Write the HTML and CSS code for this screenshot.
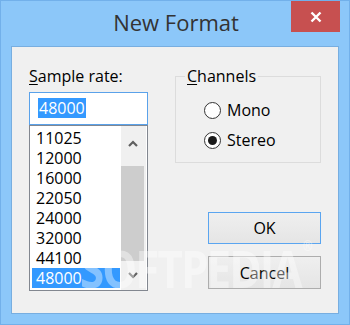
FILE: index.html
```html
<!DOCTYPE html>
<html>
<head>
<meta charset="utf-8">
<link rel="stylesheet" href="styles.css">
</head>
<body>
<div class="window">
  <div class="titlebar">
    <span class="title">New Format</span>
    <div class="close">
      <svg width="12" height="12" viewBox="0 0 12 12"><path d="M1.5 1.5 L10.5 10.5 M10.5 1.5 L1.5 10.5" stroke="#fff" stroke-width="2.4" fill="none"/></svg>
    </div>
  </div>
  <div class="client">
    <div class="col-left">
      <div class="label"><u>S</u>ample rate:</div>
      <div class="combo-input"><span class="sel">48000</span></div>
      <div class="listbox">
        <ul class="items">
          <li>11025</li>
          <li>12000</li>
          <li>16000</li>
          <li>22050</li>
          <li>24000</li>
          <li>32000</li>
          <li>44100</li>
          <li class="selected">48000</li>
        </ul>
        <div class="scrollbar">
          <div class="sb-btn up">
            <svg width="10" height="7" viewBox="0 0 10 7"><path d="M1 6 L5 2 L9 6" stroke="#606060" stroke-width="2.2" fill="none"/></svg>
          </div>
          <div class="sb-track"><div class="thumb"></div></div>
          <div class="sb-btn down">
            <svg width="10" height="7" viewBox="0 0 10 7"><path d="M1 1 L5 5 L9 1" stroke="#606060" stroke-width="2.2" fill="none"/></svg>
          </div>
        </div>
      </div>
    </div>
    <div class="col-right">
      <fieldset class="group">
        <legend><u>C</u>hannels</legend>
        <div class="radios">
          <div class="radio"><span class="circle"></span><span>Mono</span></div>
          <div class="radio checked"><span class="circle"></span><span>Stereo</span></div>
        </div>
      </fieldset>
      <div class="buttons">
        <div class="btn default">OK</div>
        <div class="btn">Cancel</div>
      </div>
    </div>
    <div class="watermark" aria-hidden="true">SOFTPEDIA<span class="reg">®</span></div>
  </div>
</div>
</body>
</html>
```
FILE: styles.css
```css
* { box-sizing: border-box; }
html, body { margin: 0; padding: 0; }
body {
  width: 350px;
  height: 325px;
  font-family: "Open Sans", "Noto Sans", sans-serif;
  font-size: 16px;
  color: #000;
}
.window {
  width: 350px;
  height: 325px;
  border: 1px solid #72b0ea;
  background: #8cc7f9;
  display: flex;
  flex-direction: column;
  padding: 0 10px 10px;
  position: relative;
}
.titlebar {
  height: 45px;
  display: flex;
  align-items: center;
  justify-content: center;
}
.title {
  font-size: 22px;
  color: #333;
  line-height: 45px;
  padding-bottom: 2px;
  padding-left: 2px;
}
.close {
  position: absolute;
  top: 0;
  left: 290px;
  width: 49px;
  height: 31px;
  background: #c75050;
  display: flex;
  align-items: center;
  justify-content: center;
}
.client {
  flex: 1;
  border: 1px solid #78aee0;
  background: #f0f0f0;
  display: flex;
  padding: 19px 0 0 17px;
  gap: 27px;
  position: relative;
  overflow: hidden;
}
.col-left {
  width: 119px;
  display: flex;
  flex-direction: column;
}
.label {
  line-height: 20px;
  height: 20px;
  white-space: nowrap;
}
u { text-underline-offset: 2px; }
.combo-input {
  margin-top: 6px;
  height: 33px;
  border: 1px solid #5aa2ea;
  background: #fff;
  padding: 5px 0 6px 8px;
  display: flex;
}
.sel {
  background: #3399ff;
  color: #fff;
  line-height: 20px;
  padding: 0 1px;
}
.listbox {
  height: 166px;
  border: 1px solid #828790;
  background: #fff;
  display: flex;
}
.items {
  list-style: none;
  margin: 2px 1px 2px 2px;
  padding: 0;
  flex: 1;
}
.items li {
  height: 20px;
  line-height: 20px;
  padding-left: 4px;
}
.items li.selected {
  background: #3399ff;
  color: #fff;
}
.scrollbar {
  width: 25px;
  margin-right: 1px;
  background: #f0f0f0;
  display: flex;
  flex-direction: column;
}
.sb-btn {
  display: flex;
  align-items: center;
  justify-content: center;
  padding-right: 2px;
}
.sb-btn.up { height: 34px; padding-top: 1px; }
.sb-btn.down { height: 29px; }
.sb-track {
  flex: 1;
  padding: 6px 2px 0 0;
}
.thumb {
  height: 95px;
  background: #cdcdcd;
}
.col-right {
  width: 146px;
  display: flex;
  flex-direction: column;
}
.group {
  margin: 0;
  padding: 0;
  border: 1px solid #dcdcdc;
  min-width: 0;
}
.group legend {
  line-height: 20px;
  padding: 0 2px;
  margin-left: 9px;
}
.radios {
  padding: 12px 0 10px 28px;
  display: flex;
  flex-direction: column;
  gap: 6px;
}
.radio {
  height: 24px;
  display: flex;
  align-items: center;
  gap: 6px;
  line-height: 20px;
}
.circle {
  width: 17px;
  height: 17px;
  border-radius: 50%;
  border: 1px solid #333;
  background: #fff;
  display: flex;
  align-items: center;
  justify-content: center;
  flex: none;
}
.radio.checked .circle::after {
  content: "";
  width: 9px;
  height: 9px;
  border-radius: 50%;
  background: #1a1a1a;
}
.buttons {
  margin-top: 49px;
  display: flex;
  flex-direction: column;
  align-items: flex-end;
  gap: 12px;
}
.btn {
  width: 113px;
  height: 33px;
  border: 1px solid #adadad;
  background: linear-gradient(#efefef, #e5e5e5);
  display: flex;
  align-items: center;
  justify-content: center;
  line-height: 20px;
  position: relative;
  z-index: 1;
}
.btn.default {
  height: 32px;
  border-color: #5aa5f0;
}
.watermark {
  position: absolute;
  left: 68px;
  top: 196px;
  font-size: 44px;
  font-weight: bold;
  letter-spacing: -2px;
  color: rgba(255, 255, 255, 0.4);
  line-height: 50px;
  transform: scaleY(1.2);
  pointer-events: none;
  white-space: nowrap;
  z-index: 2;
}
.reg {
  font-size: 12px;
  vertical-align: top;
  line-height: 14px;
  margin-left: 2px;
}
```
